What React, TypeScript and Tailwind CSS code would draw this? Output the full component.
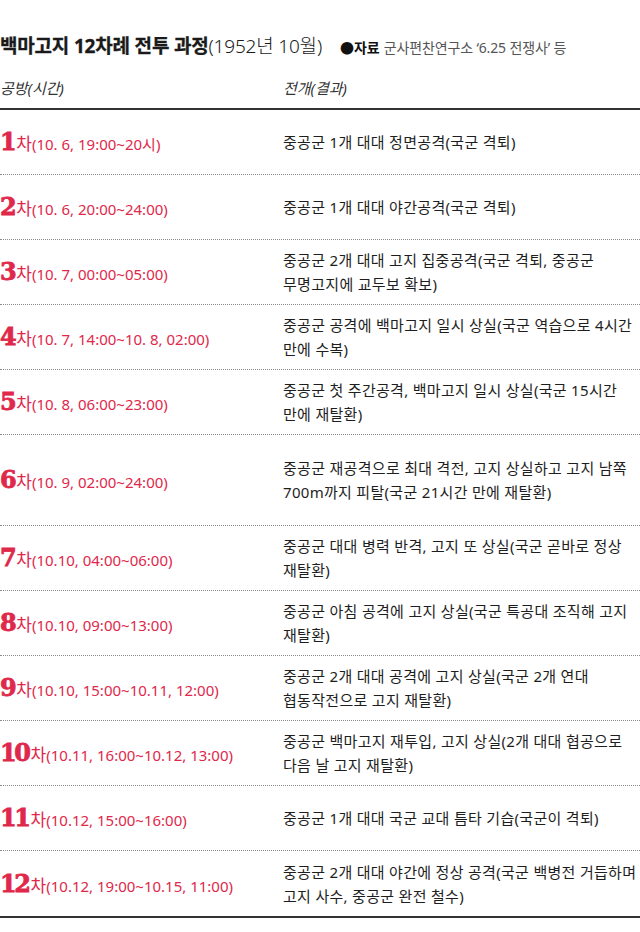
const sans = "font-['Noto_Sans','Noto_Sans_CJK_KR',sans-serif]";

type Row = { n: string; time: string; body: string[]; tall?: boolean };

const rows: Row[] = [
  { n: "1", time: "(10. 6, 19:00~20시)", body: ["중공군 1개 대대 정면공격(국군 격퇴)"] },
  { n: "2", time: "(10. 6, 20:00~24:00)", body: ["중공군 1개 대대 야간공격(국군 격퇴)"] },
  {
    n: "3",
    time: "(10. 7, 00:00~05:00)",
    body: ["중공군 2개 대대 고지 집중공격(국군 격퇴, 중공군", "무명고지에 교두보 확보)"],
  },
  {
    n: "4",
    time: "(10. 7, 14:00~10. 8, 02:00)",
    body: ["중공군 공격에 백마고지 일시 상실(국군 역습으로 4시간", "만에 수복)"],
  },
  {
    n: "5",
    time: "(10. 8, 06:00~23:00)",
    body: ["중공군 첫 주간공격, 백마고지 일시 상실(국군 15시간", "만에 재탈환)"],
  },
  {
    n: "6",
    time: "(10. 9, 02:00~24:00)",
    body: ["중공군 재공격으로 최대 격전, 고지 상실하고 고지 남쪽", "700m까지 피탈(국군 21시간 만에 재탈환)"],
    tall: true,
  },
  {
    n: "7",
    time: "(10.10, 04:00~06:00)",
    body: ["중공군 대대 병력 반격, 고지 또 상실(국군 곧바로 정상", "재탈환)"],
  },
  {
    n: "8",
    time: "(10.10, 09:00~13:00)",
    body: ["중공군 아침 공격에 고지 상실(국군 특공대 조직해 고지", "재탈환)"],
  },
  {
    n: "9",
    time: "(10.10, 15:00~10.11, 12:00)",
    body: ["중공군 2개 대대 공격에 고지 상실(국군 2개 연대", "협동작전으로 고지 재탈환)"],
  },
  {
    n: "10",
    time: "(10.11, 16:00~10.12, 13:00)",
    body: ["중공군 백마고지 재투입, 고지 상실(2개 대대 협공으로", "다음 날 고지 재탈환)"],
  },
  { n: "11", time: "(10.12, 15:00~16:00)", body: ["중공군 1개 대대 국군 교대 틈타 기습(국군이 격퇴)"] },
  {
    n: "12",
    time: "(10.12, 19:00~10.15, 11:00)",
    body: ["중공군 2개 대대 야간에 정상 공격(국군 백병전 거듭하며", "고지 사수, 중공군 완전 철수)"],
  },
];

export default function App() {
  return (
    <div className={`w-[640px] bg-white pt-[32px] ${sans}`}>
      {/* title */}
      <div className="flex h-[26px] items-baseline whitespace-nowrap">
        <span className="text-[19px] font-bold tracking-[-0.01em] text-[#1a1a1a] [-webkit-text-stroke:0.3px_#1a1a1a]">
          백마고지 12차례 전투 과정
        </span>
        <span className="text-[19px] font-light tracking-[-0.01em] text-[#1a1a1a]">(1952년 10월)</span>
        <span className="ml-[18px] text-[14px] font-bold text-[#111]">●자료</span>
        <span className="ml-[4px] text-[14px] tracking-[-0.01em] text-[#555]">군사편찬연구소 ‘6.25 전쟁사’ 등</span>
      </div>

      {/* column heads */}
      <div className="mt-[19px] flex border-b-2 border-[#333] pb-[9px] text-[15px] italic leading-[22px] text-[#333]">
        <div className="w-[283px]">공방(시간)</div>
        <div>전개(결과)</div>
      </div>

      <div className="border-b-2 border-[#333]">
        {rows.map((r, i) => (
          <div
            key={r.n}
            className={`flex items-center ${r.tall ? "h-[91px]" : "h-[65px]"} ${
              i < rows.length - 1 ? "border-b border-dotted border-[#8a8a8a]" : ""
            }`}
          >
            <div className="flex w-[283px] items-baseline whitespace-nowrap text-[#e0284b]">
              <span className="font-['DejaVu_Serif',serif] text-[24px] font-bold leading-none tracking-[-0.1em] [-webkit-text-stroke:0.8px_#e0284b]">
                {r.n}
              </span>
              <span className="ml-[2px] text-[17px] leading-none">차</span>
              <span className="text-[15px] leading-none">{r.time}</span>
            </div>
            <div className="text-[15px] leading-[24px] tracking-[0.02em] text-[#1e1e1e]">
              {r.body.map((l) => (
                <div key={l} className="whitespace-nowrap">
                  {l}
                </div>
              ))}
            </div>
          </div>
        ))}
      </div>
    </div>
  );
}
